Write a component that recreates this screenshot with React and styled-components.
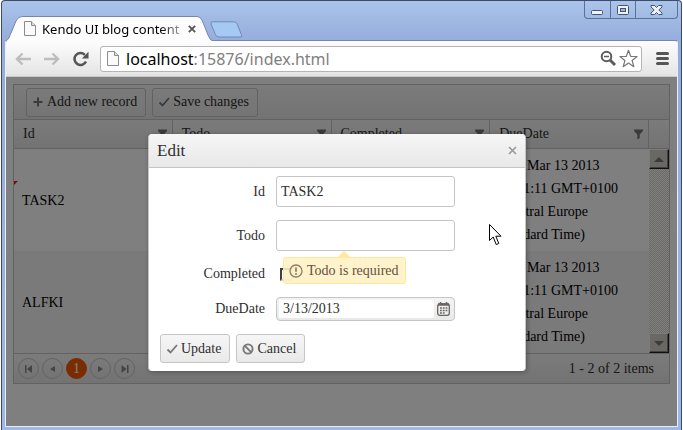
import { useState } from "react";
import styled, { createGlobalStyle, css } from "styled-components";

const GlobalStyle = createGlobalStyle`
  * {
    box-sizing: border-box;
  }

  body {
    margin: 0;
    background-color: #fff;
    font-family: "Liberation Serif", serif;
    font-size: 14px;
    color: #2e2e2e;
  }

  button,
  input {
    font: inherit;
    color: inherit;
  }
`;

const BrowserWindow = styled.div`
  display: flex;
  flex-direction: column;
  min-height: 100vh;
  margin: 0 1px;
  padding: 0 3px 3px;
  border: 1px solid #3f4a66;
  border-bottom: none;
  border-radius: 4px 4px 0 0;
  background: linear-gradient(#a9c4ea, #96acdb 40px, #9db7e6);
  overflow: hidden;
`;

const TitleBar = styled.div`
  display: flex;
  align-items: flex-end;
  height: 39px;
`;

const Tab = styled.div`
  position: relative;
  display: flex;
  align-items: center;
  width: 208px;
  height: 25px;
  padding: 0 18px 0 19px;
  gap: 6px;
  margin-bottom: -1px;

  > * {
    position: relative;
    flex: none;
  }
`;

const TabShape = styled.svg`
  && {
    position: absolute;
    inset: 0;
    width: 100%;
    height: 100%;
  }
`;

const TabTitle = styled.span`
  width: 140px;
  overflow: hidden;
  white-space: nowrap;
  font-family: "Noto Sans", sans-serif;
  font-size: 13px;
  line-height: 20px;
  color: #000;
  mask-image: linear-gradient(to right, #000 118px, rgba(0, 0, 0, 0.3) 140px);
`;

const BareButton = styled.button`
  display: flex;
  align-items: center;
  justify-content: center;
  padding: 0;
  border: none;
  background: none;
`;

const NewTabButton = styled(BareButton)`
  align-self: flex-end;
  margin-bottom: 2px;
  margin-left: -3px;
`;

const WindowControls = styled.div`
  display: flex;
  align-self: flex-start;
  height: 18px;
  margin-left: auto;
  border: 1px solid #5d6f98;
  border-top: none;
  border-radius: 0 0 4px 4px;

  button {
    width: 25px;
  }

  button + button {
    border-left: 1px solid #5d6f98;
  }

  button:last-child {
    width: 42px;
  }
`;

const BrowserBody = styled.div`
  flex: 1;
  display: flex;
  flex-direction: column;
  border: 1px solid #e9eef7;
  border-top: 1px solid #7585ae;
  border-radius: 3px 3px 0 0;
  overflow: hidden;
`;

const AddressBar = styled.div`
  display: flex;
  align-items: center;
  height: 36px;
  padding: 0 7px;
  background: linear-gradient(#fdfdfd, #e4e4e4);
  border-bottom: 1px solid #c9c9c9;
`;

const NavButton = styled(BareButton)`
  width: 20px;
  height: 20px;
  margin-right: 9px;
`;

const Omnibox = styled.div`
  flex: 1;
  display: flex;
  align-items: center;
  height: 26px;
  padding: 0 3px 0 6px;
  background-color: #fff;
  border: 1px solid #b4b4b4;
  border-radius: 3px;
`;

const Url = styled.span`
  flex: 1;
  margin-left: 7px;
  font-family: "Noto Sans", sans-serif;
  font-size: 16px;
  line-height: 22px;
  color: #808080;

  b {
    font-weight: normal;
    color: #000;
  }
`;

const MenuButton = styled(BareButton)`
  width: 16px;
  margin-left: 12px;
`;

const Viewport = styled.main`
  position: relative;
  flex: 1;
  padding: 7px;
  background-color: #fff;
`;

const Grid = styled.section`
  border: 1px solid #c5c5c5;
`;

const bar = css`
  background: linear-gradient(#f7f7f7, #e6e6e6);
`;

const GridToolbar = styled.div`
  display: flex;
  align-items: center;
  gap: 6px;
  height: 35px;
  padding: 0 12px;
  border-bottom: 1px solid #c5c5c5;
  ${bar}
`;

const Button = styled.button`
  display: flex;
  align-items: center;
  gap: 2px;
  height: 29px;
  padding: 0 8px 0 5px;
  border: 1px solid #c5c5c5;
  border-radius: 3px;
  line-height: 20px;
  white-space: nowrap;
  background: linear-gradient(#f6f6f6, #e9e9e9);
`;

const HeaderWrap = styled.div`
  display: flex;
  border-bottom: 1px solid #c5c5c5;
  ${bar}

  table {
    flex: 1;
  }
`;

const HeaderFiller = styled.div`
  width: 20px;
`;

const Table = styled.table`
  width: 100%;
  table-layout: fixed;
  border-collapse: separate;
  border-spacing: 0;
`;

const HeaderCell = styled.th`
  height: 28px;
  padding: 0 4px 0 9px;
  border-right: 1px solid #c5c5c5;
  font-weight: normal;
  text-align: left;

  div {
    display: flex;
    align-items: center;
    justify-content: space-between;
  }
`;

const GridContent = styled.div`
  display: flex;
`;

const Row = styled.tr`
  background-color: ${({ $alt }) => ($alt ? "#f4f4f4" : "#fff")};
`;

const Cell = styled.td`
  position: relative;
  padding: 5px 8px;
  line-height: 23px;
  color: #000;

  ${({ $dirty }) =>
    $dirty &&
    css`
      &::before {
        content: "";
        position: absolute;
        top: 32px;
        left: 0;
        border: 2px solid;
        border-color: #f10 transparent transparent #f10;
      }
    `}
`;

const ScrollBar = styled.div`
  display: flex;
  flex-direction: column;
  justify-content: space-between;
  width: 20px;
  flex: none;
  background: repeating-conic-gradient(#d8d4cc 0 25%, #fff 0 50%) 0 0 / 2px 2px;
`;

const ScrollButton = styled(BareButton)`
  height: 20px;
  background-color: #d4d0c8;
  border: 1px solid;
  border-color: #f4f4f4 #202020 #202020 #f4f4f4;
  box-shadow: inset -1px -1px #808080;
`;

const Pager = styled.nav`
  display: flex;
  align-items: center;
  gap: 3px;
  height: 30px;
  padding: 0 15px 0 4px;
  border-top: 1px solid #c5c5c5;
  ${bar}
`;

const PagerLink = styled.a`
  display: flex;
  align-items: center;
  justify-content: center;
  width: 21px;
  height: 21px;
  border: 1px solid ${({ $current }) => ($current ? "#f35800" : "#c5c5c5")};
  border-radius: 50%;
  font-size: 14px;
  text-decoration: none;
  color: #fff;
  background-color: ${({ $current }) => ($current ? "#f35800" : "transparent")};
`;

const PagerInfo = styled.span`
  margin-left: auto;
`;

const Overlay = styled.div`
  position: absolute;
  inset: 0;
  display: flex;
  align-items: center;
  justify-content: center;
  padding: 2px 9px 0 0;
  background-color: rgba(0, 0, 0, 0.5);
`;

const Dialog = styled.form`
  position: relative;
  width: 378px;
  border: 1px solid #c5c5c5;
  border-width: 0 1px;
  border-radius: 4px;
  background-color: #fff;
  box-shadow: 1px 1px 5px rgba(0, 0, 0, 0.3);
`;

const DialogHeader = styled.header`
  display: flex;
  align-items: center;
  justify-content: space-between;
  height: 34px;
  padding: 0 8px;
  border-bottom: 1px solid #c5c5c5;
  border-radius: 4px 4px 0 0;
  background: linear-gradient(#f6f6f6, #e8e8e8);

  h2 {
    margin: 0;
    font-size: 17px;
    font-weight: normal;
    line-height: 20px;
  }
`;

const Fields = styled.div`
  display: grid;
  grid-template-columns: 105px 179px;
  align-items: center;
  gap: 13px 11px;
  padding: 8px 11px 13px;
`;

const Label = styled.label`
  text-align: right;
  line-height: 20px;
`;

const Field = styled.div`
  position: relative;
  display: flex;
  align-items: center;
  min-height: 20px;
`;

const TextBox = styled.input`
  width: 100%;
  height: 31px;
  padding: 0 4px;
  border: 1px solid #c5c5c5;
  border-radius: 3px;
  background-color: #fff;
  outline: none;
`;

const CheckBox = styled.input`
  appearance: none;
  width: 13px;
  height: 13px;
  margin: 0 4px;
  border: 2px solid;
  border-color: #404040 #d4d0c8 #d4d0c8 #404040;
  background-color: #fff;
`;

const DatePicker = styled.div`
  display: flex;
  width: 100%;
  height: 24px;
  padding: 2px;
  border: 1px solid #c5c5c5;
  border-radius: 4px;
  background: linear-gradient(#f4f4f4, #e9e9e9);

  input {
    flex: 1;
    min-width: 0;
    padding: 0 4px;
    border: none;
    background-color: #fff;
    outline: none;
  }

  button {
    width: 18px;
  }
`;

const Tooltip = styled.div`
  position: absolute;
  top: 37px;
  left: 7px;
  z-index: 1;
  display: flex;
  align-items: center;
  gap: 4px;
  height: 27px;
  padding: 0 6px 0 5px;
  border: 1px solid #ffe79e;
  border-radius: 3px;
  white-space: nowrap;
  color: #635142;
  background-color: rgba(255, 241, 196, 0.88);

  &::before {
    content: "";
    position: absolute;
    top: -7px;
    left: 54px;
    border: 6px solid transparent;
    border-top: none;
    border-bottom-color: #ffe79e;
  }
`;

const DialogFooter = styled.footer`
  display: flex;
  gap: 6px;
  padding: 0 11px 8px;
`;

const Pointer = styled.svg`
  position: absolute;
  top: 90px;
  left: 340px;
`;

const PageIcon = ({ width = 12, height = 15 }) => (
  <svg width={width} height={height} viewBox="0 0 12 15" fill="#fafafa" stroke="#8c8c8c">
    <path d="M1 .5h6.5l4 4v10H.5V.5z" />
    <path d="M7.5 .5v4h4" fill="#ddd" />
  </svg>
);

const ArrowIcon = ({ forward }) => (
  <svg width="16" height="14" viewBox="0 0 16 14" fill="none" stroke="#bdbdbd" strokeWidth="2.4">
    {forward ? (
      <path d="M0 7h14M8.500 1.500 14 7l-5.500 5.500" />
    ) : (
      <path d="M16 7H2M7.500 1.500 2 7l5.500 5.500" />
    )}
  </svg>
);

const CheckIcon = () => (
  <svg width="13" height="12" viewBox="0 0 13 12" fill="none" stroke="#777" strokeWidth="1.800">
    <path d="M1.500 6.500l3 3L11 2" />
  </svg>
);

const PlusIcon = () => (
  <svg width="13" height="12" viewBox="0 0 13 12" fill="none" stroke="#777" strokeWidth="2">
    <path d="M6 1.500v9M1.500 6h9" />
  </svg>
);

const CancelIcon = () => (
  <svg width="13" height="12" viewBox="0 0 13 12" fill="none" stroke="#777" strokeWidth="1.900">
    <circle cx="6" cy="6" r="4.600" />
    <path d="M2.700 2.700l6.600 6.600" />
  </svg>
);

const FilterIcon = () => (
  <svg width="11" height="11" viewBox="0 0 11 11" fill="#777">
    <path d="M1 .5h9v1.500L6.700 5.500V9L4.300 10.500V5.500L1 2z" />
  </svg>
);

const CalendarIcon = () => (
  <svg width="13" height="14" viewBox="0 0 13 14" fill="none" stroke="#6a6563">
    <rect x=".7" y="2" width="11.600" height="11.300" rx="2" strokeWidth="1.300" />
    <path d="M1 2.500h11" strokeWidth="2.500" />
    <path d="M3.500 0v2M9.500 0v2" strokeWidth="1.500" />
    <path d="M3 6h7.500M3 8.500h7.500M3 11h5" strokeWidth="1.500" strokeDasharray="1.800 1" />
  </svg>
);

const pagerPaths = {
  first: "M1 0h1.500v8H1zM8 0v8L3 4z",
  prev: "M7 1v6L2 4z",
  next: "M2 1v6l5-3z",
  last: "M7 0h1.500v8H7zM1.500 0v8l5-4z",
};

const PagerIcon = ({ name }) => (
  <svg width="9" height="8" viewBox="0 0 9 8" fill="#888">
    <path d={pagerPaths[name]} />
  </svg>
);

const columns = ["Id", "Todo", "Completed", "DueDate"];

const dueDate = "Wed Mar 13 2013 10:21:11 GMT+0100 (Central Europe Standard Time)";

const tasks = [
  { id: "TASK2", todo: "", completed: "false", dueDate, dirty: true },
  { id: "ALFKI", todo: "Task", completed: "true", dueDate },
];

const BrowserHeader = () => (
  <TitleBar>
    <Tab>
      <TabShape viewBox="0 0 208 25" preserveAspectRatio="none">
        <path
          d="M0 25C4 24 4 21 6 17L11 5Q13 .5 17 .5H192Q195 .5 197 4L203 19Q205 24.500 208 25"
          fill="#fdfdfd"
          stroke="#7585ae"
        />
      </TabShape>
      <PageIcon />
      <TabTitle>Kendo UI blog content</TabTitle>
      <BareButton aria-label="Close tab">
        <svg width="8" height="8" viewBox="0 0 8 8" stroke="#555" strokeWidth="1.800">
          <path d="M.8 .8l6.400 6.400M7.200 .8L.8 7.200" />
        </svg>
      </BareButton>
    </Tab>
    <NewTabButton aria-label="New tab">
      <svg width="33" height="17" viewBox="0 0 33 17">
        <path
          d="M3 .8h21q2 0 3 2l4.500 11q1 2.200-1.500 2.200H9q-2.500 0-3.500-2.200L1 3Q.2 .8 3 .8z"
          fill="#a5c9f2"
          stroke="#7189b8"
        />
      </svg>
    </NewTabButton>
    <WindowControls>
      <BareButton aria-label="Minimize">
        <svg width="13" height="16" viewBox="0 0 13 16" fill="#eef3fb" stroke="#46536f">
          <rect x=".5" y="8.500" width="11" height="4" rx="1" />
        </svg>
      </BareButton>
      <BareButton aria-label="Maximize">
        <svg width="13" height="16" viewBox="0 0 13 16" fill="#eef3fb" stroke="#46536f">
          <rect x=".5" y="3.500" width="11" height="9" rx="1" />
          <rect x="3.500" y="6.500" width="5" height="3" fill="#a0b8e2" />
        </svg>
      </BareButton>
      <BareButton aria-label="Close">
        <svg width="13" height="16" viewBox="0 0 13 16" fill="#eef3fb" stroke="#46536f">
          <path d="M1 3.500h3.500l2 2 2-2H12v1.500L8.800 8l3.200 3v1.500H8.500l-2-2-2 2H1V11l3.200-3L1 5z" />
        </svg>
      </BareButton>
    </WindowControls>
  </TitleBar>
);

const BrowserAddress = () => (
  <AddressBar>
    <NavButton aria-label="Back">
      <ArrowIcon />
    </NavButton>
    <NavButton aria-label="Forward">
      <ArrowIcon forward />
    </NavButton>
    <NavButton aria-label="Reload">
      <svg width="16" height="16" viewBox="0 0 16 16">
        <path d="M13 10.500A6 6 0 1 1 11.800 3.800" fill="none" stroke="#555" strokeWidth="2.500" />
        <path d="M15.500 .8v6.700H8.800z" fill="#555" />
      </svg>
    </NavButton>
    <Omnibox>
      <PageIcon />
      <Url>
        <b>localhost</b>:15876/index.html
      </Url>
      <BareButton aria-label="Zoom out">
        <svg width="18" height="17" viewBox="0 0 18 17" fill="none" stroke="#5c5c5c">
          <circle cx="6.500" cy="6.500" r="4.800" strokeWidth="2" />
          <path d="M4 6.500h5" strokeWidth="1.500" />
          <path d="M10 10l5 5" strokeWidth="3" />
        </svg>
      </BareButton>
      <BareButton aria-label="Bookmark">
        <svg width="20" height="19" viewBox="0 0 20 19" fill="#fff" stroke="#777" strokeWidth="1.200">
          <path
            d="M10.500 1.300l2.200 6 6.400.2-5 4 1.700 6.200-5.300-3.600-5.300 3.600 1.700-6.200-5-4 6.400-.2z"
            strokeLinejoin="round"
          />
        </svg>
      </BareButton>
    </Omnibox>
    <MenuButton aria-label="Menu">
      <svg width="13" height="13" viewBox="0 0 13 13" stroke="#555" strokeWidth="3" strokeLinecap="round">
        <path d="M1.500 1.500h10M1.500 6.500h10M1.500 11.500h10" />
      </svg>
    </MenuButton>
  </AddressBar>
);

const TaskGrid = () => (
  <Grid>
    <GridToolbar>
      <Button>
        <PlusIcon />
        Add new record
      </Button>
      <Button>
        <CheckIcon />
        Save changes
      </Button>
    </GridToolbar>
    <HeaderWrap>
      <Table>
        <thead>
          <tr>
            {columns.map((column) => (
              <HeaderCell key={column}>
                <div>
                  {column}
                  <FilterIcon />
                </div>
              </HeaderCell>
            ))}
          </tr>
        </thead>
      </Table>
      <HeaderFiller />
    </HeaderWrap>
    <GridContent>
      <Table>
        <tbody>
          {tasks.map((task, index) => (
            <Row key={task.id} $alt={index % 2 === 1}>
              <Cell $dirty={task.dirty}>{task.id}</Cell>
              <Cell>{task.todo}</Cell>
              <Cell>{task.completed}</Cell>
              <Cell>{task.dueDate}</Cell>
            </Row>
          ))}
        </tbody>
      </Table>
      <ScrollBar>
        <ScrollButton aria-label="Scroll up">
          <svg width="10" height="5" viewBox="0 0 10 5" fill="#777">
            <path d="M5 0l5 5H0z" />
          </svg>
        </ScrollButton>
        <ScrollButton aria-label="Scroll down">
          <svg width="10" height="5" viewBox="0 0 10 5" fill="#777">
            <path d="M5 5l5-5H0z" />
          </svg>
        </ScrollButton>
      </ScrollBar>
    </GridContent>
    <Pager>
      <PagerLink href="#first" aria-label="First page">
        <PagerIcon name="first" />
      </PagerLink>
      <PagerLink href="#prev" aria-label="Previous page">
        <PagerIcon name="prev" />
      </PagerLink>
      <PagerLink href="#1" $current>
        1
      </PagerLink>
      <PagerLink href="#next" aria-label="Next page">
        <PagerIcon name="next" />
      </PagerLink>
      <PagerLink href="#last" aria-label="Last page">
        <PagerIcon name="last" />
      </PagerLink>
      <PagerInfo>1 - 2 of 2 items</PagerInfo>
    </Pager>
  </Grid>
);

const EditDialog = () => {
  const [task, setTask] = useState({
    id: "TASK2",
    todo: "",
    completed: false,
    dueDate: "3/13/2013",
  });

  const handleChange = (e) => {
    const { name, type, value, checked } = e.target;
    setTask({ ...task, [name]: type === "checkbox" ? checked : value });
  };

  return (
    <Dialog onSubmit={(e) => e.preventDefault()}>
      <DialogHeader>
        <h2>Edit</h2>
        <BareButton type="button" aria-label="Close dialog">
          <svg width="9" height="9" viewBox="0 0 9 9" stroke="#999" strokeWidth="1.600">
            <path d="M1 1l7 7M8 1L1 8" />
          </svg>
        </BareButton>
      </DialogHeader>
      <Fields>
        <Label htmlFor="id">Id</Label>
        <Field>
          <TextBox id="id" name="id" value={task.id} onChange={handleChange} />
        </Field>
        <Label htmlFor="todo">Todo</Label>
        <Field>
          <TextBox id="todo" name="todo" value={task.todo} onChange={handleChange} />
          {!task.todo && (
            <Tooltip role="alert">
              <svg width="14" height="14" viewBox="0 0 14 14" fill="none" stroke="#8f7d66">
                <circle cx="7" cy="7" r="6" strokeWidth="1.300" />
                <path d="M7 3.500v4.200M7 9v1.800" strokeWidth="1.800" />
              </svg>
              Todo is required
            </Tooltip>
          )}
        </Field>
        <Label htmlFor="completed">Completed</Label>
        <Field>
          <CheckBox
            id="completed"
            name="completed"
            type="checkbox"
            checked={task.completed}
            onChange={handleChange}
          />
        </Field>
        <Label htmlFor="dueDate">DueDate</Label>
        <Field>
          <DatePicker>
            <input id="dueDate" name="dueDate" value={task.dueDate} onChange={handleChange} />
            <BareButton type="button" aria-label="Open calendar">
              <CalendarIcon />
            </BareButton>
          </DatePicker>
        </Field>
      </Fields>
      <DialogFooter>
        <Button type="submit">
          <CheckIcon />
          Update
        </Button>
        <Button type="button">
          <CancelIcon />
          Cancel
        </Button>
      </DialogFooter>
      <Pointer width="13" height="22" viewBox="0 0 13 22" fill="#fff" stroke="#000">
        <path d="M.5 .5v16l3.700-3.500 3 7.500 2.600-1-3-7.300H12z" />
      </Pointer>
    </Dialog>
  );
};

const App = () => {
  return (
    <>
      <GlobalStyle />
      <BrowserWindow>
        <BrowserHeader />
        <BrowserBody>
          <BrowserAddress />
          <Viewport>
            <TaskGrid />
            <Overlay>
              <EditDialog />
            </Overlay>
          </Viewport>
        </BrowserBody>
      </BrowserWindow>
    </>
  );
};

export default App;
